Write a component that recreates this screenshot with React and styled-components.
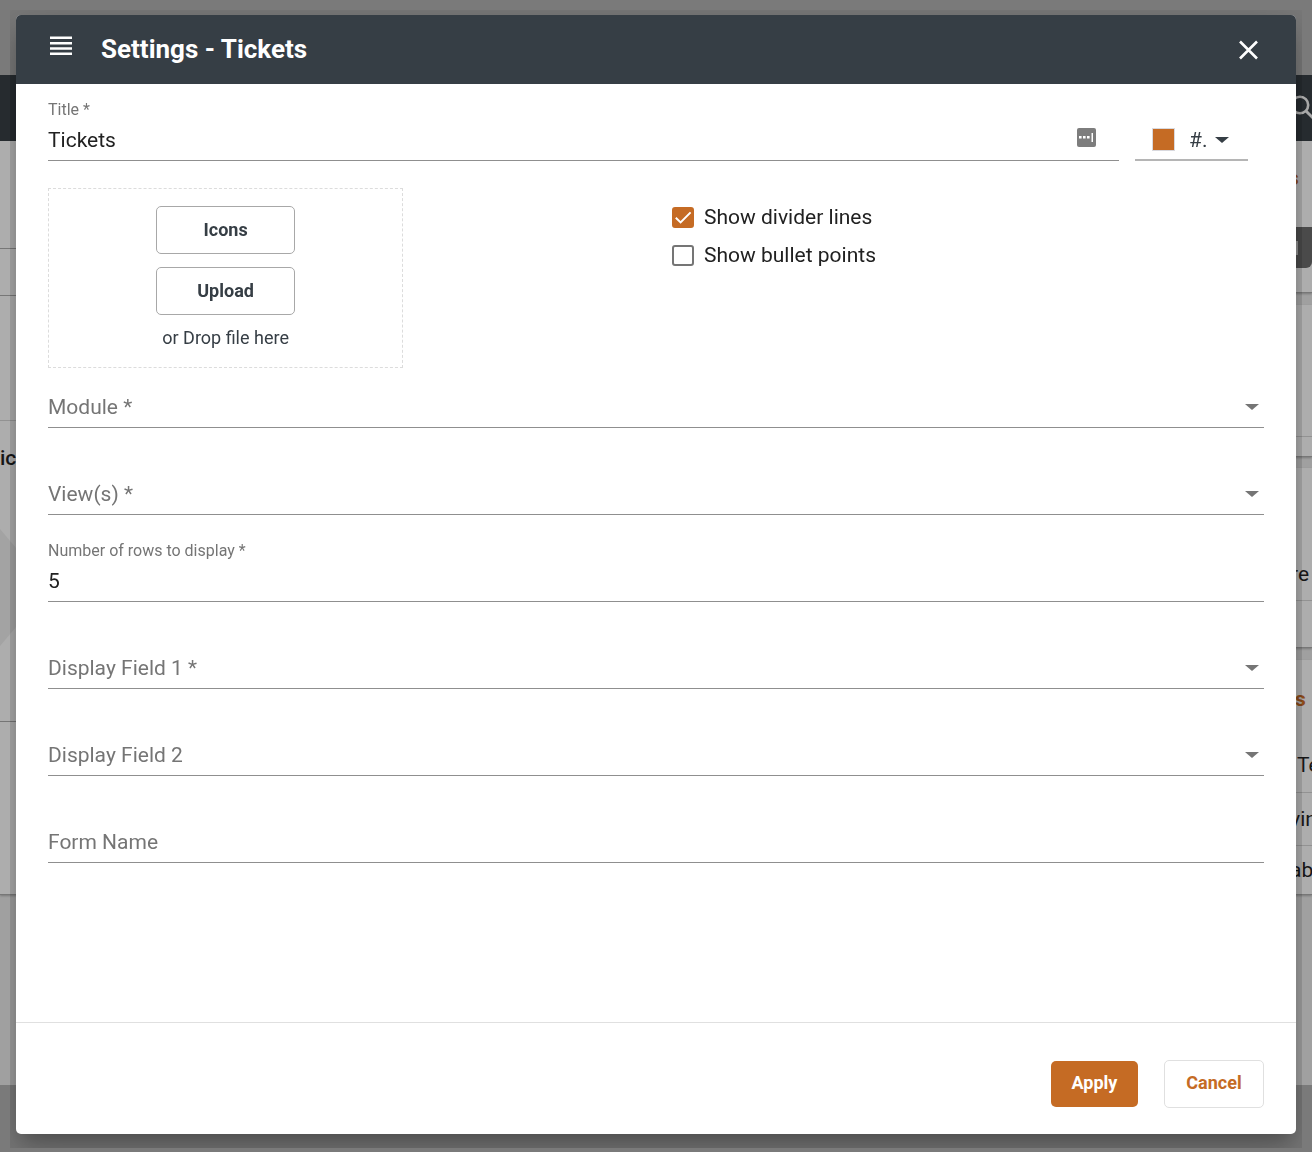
import React, { useId, useState } from "react";
import styled, { createGlobalStyle } from "styled-components";

const accent = "#c56b24";
const slate = "#363e45";

const GlobalStyle = createGlobalStyle`
  *, *::before, *::after { box-sizing: border-box; }
  body {
    margin: 0;
    font-family: Roboto, "Open Sans", sans-serif;
    color: #212121;
    overflow: hidden;
  }
  button, input, select { font: inherit; color: inherit; }
`;

/* ---------- dimmed dashboard behind the dialog ---------- */

const Page = styled.div`
  display: flex;
  flex-direction: column;
  height: 100vh;
  background: #a0a0a0;
  overflow: hidden;
`;

const TopStrip = styled.div`
  height: 75px;
  flex: none;
  background: #7a7a7a;
`;

const NavBar = styled.div`
  height: 66px;
  flex: none;
  display: flex;
  justify-content: flex-end;
  align-items: center;
  background: #262b2f;
`;

const Columns = styled.div`
  flex: 1;
  min-height: 0;
  display: flex;
  justify-content: space-between;
`;

const Column = styled.div`
  width: 24px;
  overflow: hidden;
`;

const BottomStrip = styled.div`
  height: 67px;
  flex: none;
  background: #7a7a7a;
`;

const Panel = styled.div`
  background: #adadad;
  border-bottom: 1px solid #777;
  box-shadow: 0 1px 2px rgba(0, 0, 0, 0.25);
  margin-bottom: ${(p) => p.$gap || 0}px;
`;

const Cell = styled.div`
  display: flex;
  align-items: center;
  height: ${(p) => p.$h}px;
  padding-left: ${(p) => p.$pad || 0}px;
  border-bottom: ${(p) => (p.$line ? `1px solid ${p.$line}` : "none")};
  font-size: 21px;
  font-weight: ${(p) => p.$weight || 400};
  color: ${(p) => (p.$accent ? "#8a4a19" : "#161616")};
  white-space: nowrap;
`;

const DarkTab = styled.div`
  width: 24px;
  height: 41px;
  display: flex;
  align-items: center;
  padding-left: 8px;
  background: #4a4a4a;
  border-bottom-right-radius: 6px;

  &::before {
    content: "";
    width: 2px;
    height: 14px;
    background: #8c8c8c;
  }
`;

/* ---------- dialog ---------- */

const Overlay = styled.div`
  position: fixed;
  inset: 0;
  display: flex;
  padding: 10px 10px 4px;
`;

const DialogFrame = styled.div`
  flex: 1;
  display: flex;
  padding: 5px 6px 14px;
  overflow: hidden;
`;

const Dialog = styled.form`
  flex: 1;
  display: flex;
  flex-direction: column;
  min-width: 0;
  background: #fff;
  border-radius: 5px;
  box-shadow:
    0 11px 15px -7px rgba(0, 0, 0, 0.2),
    0 24px 38px 3px rgba(0, 0, 0, 0.14),
    0 9px 46px 8px rgba(0, 0, 0, 0.12);
`;

const Header = styled.header`
  flex: none;
  height: 69px;
  display: flex;
  align-items: center;
  gap: 29px;
  padding: 0 34px;
  background: ${slate};
  color: #fff;
  border-radius: 5px 5px 0 0;
`;

const Heading = styled.h1`
  flex: 1;
  margin: 0;
  padding-bottom: 2px;
  font-size: 26px;
  line-height: 32px;
  font-weight: 700;
`;

const IconButton = styled.button`
  display: flex;
  padding: 0;
  border: 0;
  background: none;
  cursor: pointer;
`;

const MenuButton = styled(IconButton)`
  padding-bottom: 8px;
`;

const Body = styled.div`
  flex: 1;
  min-height: 0;
  padding: 17px 32px 0;
`;

const TitleRow = styled.div`
  display: flex;
  align-items: flex-end;
  gap: 16px;
  padding-right: 16px;
  margin-bottom: 27px;
`;

const MediaRow = styled.div`
  display: grid;
  grid-template-columns: 1fr 1fr;
  gap: 32px;
`;

const FieldStack = styled.div`
  display: flex;
  flex-direction: column;
  gap: 27px;
`;

const FieldBox = styled.div`
  flex: 1;
  display: grid;
  grid-template: 18px 41px / 1fr auto;
  align-items: center;
  border-bottom: 1px solid #8f8f8f;
`;

const FieldLabel = styled.label`
  grid-column: 1;
  grid-row: ${(p) => (p.$floating ? 1 : 2)};
  font-size: ${(p) => (p.$floating ? 16 : 21)}px;
  line-height: ${(p) => (p.$floating ? 18 : 26)}px;
  color: #757575;
  pointer-events: none;
`;

const TextInput = styled.input`
  grid-row: 2;
  grid-column: 1;
  width: 100%;
  height: 41px;
  padding: 0;
  border: 0;
  outline: 0;
  background: none;
  font-size: 21px;
`;

const SelectInput = styled.select`
  grid-row: 2;
  grid-column: 1 / 3;
  width: 100%;
  height: 41px;
  padding: 0;
  border: 0;
  outline: 0;
  appearance: none;
  background: none;
  font-size: 21px;
`;

const FieldEnd = styled.span`
  grid-row: 2;
  grid-column: 2;
  display: flex;
  padding-right: ${(p) => p.$pad}px;
  pointer-events: none;
`;

const Caret = styled.span`
  border: solid transparent;
  border-width: 6px 7px 0;
  border-top-color: ${(p) => p.$color || "#757575"};
`;

const ColorButton = styled.button`
  display: flex;
  align-items: center;
  width: 113px;
  height: 44px;
  padding: 3px 0 0 17px;
  border: 0;
  border-bottom: 2px solid #b5b5b5;
  background: none;
  color: ${slate};
  font-size: 21px;
  cursor: pointer;
`;

const Swatch = styled.span`
  width: 23px;
  height: 23px;
  margin-right: 14px;
  border: 1px solid #d9d9de;
  background: ${accent};
`;

const ColorCode = styled.span`
  margin-right: 8px;
`;

const DropZone = styled.div`
  width: 60%;
  height: 180px;
  display: flex;
  flex-direction: column;
  align-items: center;
  gap: 13px;
  padding-top: 17px;
  border: 1px dashed #dcdcdc;
  color: ${slate};
`;

const DropText = styled.span`
  font-size: 18px;
  line-height: 20px;
`;

const Button = styled.button`
  height: 48px;
  padding: 0 0 4px;
  border: 1px solid #e0e0e0;
  border-radius: 5px;
  background: #fff;
  color: ${accent};
  font-size: 18px;
  font-weight: 700;
  cursor: pointer;
`;

const MediaButton = styled(Button)`
  width: 139px;
  padding-bottom: 2px;
  border-color: #a8a8a8;
  color: ${slate};
`;

const CancelButton = styled(Button)`
  width: 100px;
`;

const ApplyButton = styled(Button)`
  width: 87px;
  height: 46px;
  border: 0;
  background: ${accent};
  color: #fff;
`;

const Options = styled.div`
  display: flex;
  flex-direction: column;
  padding-top: 10px;
`;

const Option = styled.label`
  display: flex;
  align-items: center;
  gap: 10px;
  height: 38px;
  font-size: 21px;
  cursor: pointer;
`;

const TickBox = styled.span`
  display: grid;

  & > * { grid-area: 1 / 1; }
  svg { pointer-events: none; }
`;

const TickInput = styled.input`
  appearance: none;
  width: 22px;
  height: 21px;
  margin: 0;
  border: 2px solid #757575;
  border-radius: 3px;

  &:checked {
    border-color: ${accent};
    background: ${accent};
  }
`;

const Footer = styled.footer`
  flex: none;
  display: flex;
  justify-content: flex-end;
  align-items: center;
  gap: 26px;
  padding: 37px 32px 26px;
  border-top: 1px solid #e0e0e0;
`;

function SelectField({ label }) {
  const id = useId();
  return (
    <FieldBox>
      <FieldLabel htmlFor={id}>{label}</FieldLabel>
      <SelectInput id={id} defaultValue="">
        <option value="" />
      </SelectInput>
      <FieldEnd $pad={5}>
        <Caret />
      </FieldEnd>
    </FieldBox>
  );
}

function TextField({ label, initial = "", end }) {
  const id = useId();
  const [value, setValue] = useState(initial);
  return (
    <FieldBox>
      <FieldLabel htmlFor={id} $floating={value !== ""}>{label}</FieldLabel>
      <TextInput id={id} value={value} onChange={(e) => setValue(e.target.value)} />
      {end}
    </FieldBox>
  );
}

function TickOption({ label, initial }) {
  const [on, setOn] = useState(initial);
  return (
    <Option>
      <TickBox>
        <TickInput type="checkbox" checked={on} onChange={() => setOn(!on)} />
        {on && (
          <svg width="22" height="21" viewBox="0 0 22 21" fill="none" stroke="#fff" strokeWidth="2">
            <path d="M3.8 10.8 8.6 15.4 18.6 5.4" />
          </svg>
        )}
      </TickBox>
      {label}
    </Option>
  );
}

function Dashboard() {
  return (
    <Page aria-hidden="true">
      <TopStrip />
      <NavBar>
        <svg width="24" height="36" viewBox="0 0 24 36" fill="none" stroke="#a8a8a8" strokeWidth="2.6">
          <circle cx="12" cy="15" r="8.200" />
          <path d="M17.500 20.500 26 29" strokeWidth="3" />
        </svg>
      </NavBar>
      <Columns>
        <Column>
          <Panel>
            <Cell $h={108} $line="#777" />
            <Cell $h={47} $line="#777" />
            <Cell $h={125} $line="#929292" />
            <Cell $h={74} $weight={500}>ice</Cell>
            <Cell $h={226}>
              <svg width="24" height="226" viewBox="0 0 24 226">
                <path d="M0 34 16 53 24 72V112L16 132 0 151Z" fill="#a3a3a3" />
              </svg>
            </Cell>
          </Panel>
          <Panel>
            <Cell $h={172} />
          </Panel>
        </Column>
        <Column>
          <Panel $gap={12}>
            <Cell $h={74} $weight={700} $accent>s</Cell>
            <Cell $h={12} />
            <DarkTab />
            <Cell $h={24} />
          </Panel>
          <Panel $gap={11}>
            <Cell $h={132} $line="#929292" />
            <Cell $h={19} />
          </Panel>
          <Panel $gap={12}>
            <Cell $h={80} />
            <Cell $h={53} $pad={3} $line="#929292">re</Cell>
            <Cell $h={46} />
          </Panel>
          <Panel>
            <Cell $h={78} $pad={7} $weight={700} $accent>s</Cell>
            <Cell $h={55} $pad={9} $line="#929292">Te</Cell>
            <Cell $h={53} $pad={2} $line="#929292">vin</Cell>
            <Cell $h={48} $pad={2}>abl</Cell>
          </Panel>
        </Column>
      </Columns>
      <BottomStrip />
    </Page>
  );
}

export default function App() {
  return (
    <>
      <GlobalStyle />
      <Dashboard />
      <Overlay>
        <DialogFrame>
          <Dialog role="dialog" aria-labelledby="dialog-title" onSubmit={(e) => e.preventDefault()}>
            <Header>
              <MenuButton type="button" aria-label="Menu">
                <svg width="22" height="20" viewBox="0 0 22 20" fill="#fff">
                  <path d="M0 .5h22v2.5H0zM0 6h22v2.5H0zM0 11.300h22v2.500H0zM0 16.600h22v2.500H0z" />
                </svg>
              </MenuButton>
              <Heading id="dialog-title">Settings - Tickets</Heading>
              <IconButton type="button" aria-label="Close">
                <svg width="28" height="20" viewBox="0 0 28 20" fill="none" stroke="#fff" strokeWidth="2.600">
                  <path d="M6 1.500 23 18.500M23 1.500 6 18.500" />
                </svg>
              </IconButton>
            </Header>

            <Body>
              <TitleRow>
                <TextField
                  label="Title *"
                  initial="Tickets"
                  end={
                    <FieldEnd $pad={23}>
                      <svg width="19" height="24" viewBox="0 0 19 24">
                        <rect width="19" height="19" rx="2" fill="#7d7d7d" />
                        <path d="M2 8h2.600v2.600H2zM6 8h2.600v2.600H6zM10 8h2.600v2.600H10zM14.500 5H16v9h-1.500z" fill="#fff" />
                      </svg>
                    </FieldEnd>
                  }
                />
                <ColorButton type="button" aria-label="Colour">
                  <Swatch />
                  <ColorCode>#.</ColorCode>
                  <Caret $color={slate} />
                </ColorButton>
              </TitleRow>

              <MediaRow>
                <DropZone>
                  <MediaButton type="button">Icons</MediaButton>
                  <MediaButton type="button">Upload</MediaButton>
                  <DropText>or Drop file here</DropText>
                </DropZone>
                <Options>
                  <TickOption label="Show divider lines" initial={true} />
                  <TickOption label="Show bullet points" initial={false} />
                </Options>
              </MediaRow>

              <FieldStack>
                <SelectField label="Module *" />
                <SelectField label="View(s) *" />
                <TextField label="Number of rows to display *" initial="5" />
                <SelectField label="Display Field 1 *" />
                <SelectField label="Display Field 2" />
                <TextField label="Form Name" />
              </FieldStack>
            </Body>

            <Footer>
              <ApplyButton type="submit">Apply</ApplyButton>
              <CancelButton type="button">Cancel</CancelButton>
            </Footer>
          </Dialog>
        </DialogFrame>
      </Overlay>
    </>
  );
}
